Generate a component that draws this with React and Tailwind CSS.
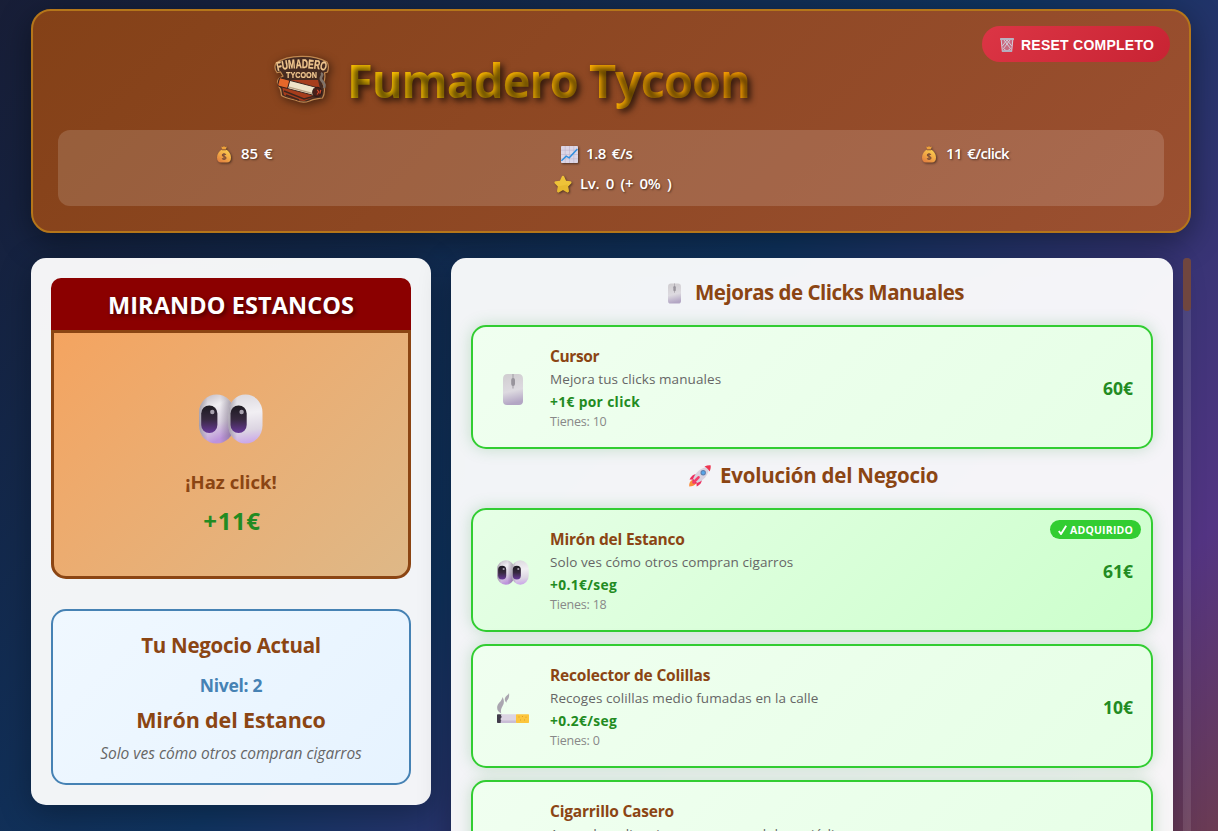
import React from "react";

function Eyes({ className }) {
  return (
    <svg viewBox="0 0 64 50" className={className}>
      <defs>
        <linearGradient id="eyeL" x1="0" y1="0" x2="0.35" y2="1">
          <stop offset="0" stopColor="#b9b2bd" />
          <stop offset="0.35" stopColor="#efedf1" />
          <stop offset="0.7" stopColor="#d8cfdf" />
          <stop offset="1" stopColor="#bd93dc" />
        </linearGradient>
        <linearGradient id="eyeR" x1="0.3" y1="0" x2="0.4" y2="1">
          <stop offset="0" stopColor="#dcd9df" />
          <stop offset="0.4" stopColor="#f1eff3" />
          <stop offset="0.75" stopColor="#dcd5e2" />
          <stop offset="1" stopColor="#cba8e8" />
        </linearGradient>
        <linearGradient id="eyeSide" x1="0" y1="0" x2="1" y2="0">
          <stop offset="0" stopColor="#6f6678" stopOpacity="0.55" />
          <stop offset="0.25" stopColor="#6f6678" stopOpacity="0" />
        </linearGradient>
        <linearGradient id="eyeInner" x1="0" y1="0" x2="1" y2="0">
          <stop offset="0.6" stopColor="#6f6678" stopOpacity="0" />
          <stop offset="0.9" stopColor="#6f6678" stopOpacity="0.5" />
        </linearGradient>
        <linearGradient id="pupil" x1="0" y1="0" x2="0" y2="1">
          <stop offset="0" stopColor="#1d1a21" />
          <stop offset="0.5" stopColor="#37293f" />
          <stop offset="1" stopColor="#69399a" />
        </linearGradient>
      </defs>
      <rect x="0" y="0.5" width="35" height="49" rx="17.5" ry="18" fill="url(#eyeL)" />
      <rect x="0" y="0.5" width="35" height="49" rx="17.5" ry="18" fill="url(#eyeSide)" />
      <rect x="0" y="0.5" width="35" height="49" rx="17.5" ry="18" fill="url(#eyeInner)" />
      <rect x="29.5" y="0.5" width="34" height="49" rx="17" ry="18" fill="url(#eyeR)" />
      <rect x="29.5" y="0.5" width="34" height="49" rx="17" ry="18" fill="url(#eyeSide)" />
      <rect x="2.2" y="11.5" width="16.2" height="27.5" rx="8" fill="url(#pupil)" />
      <rect x="31.5" y="11.5" width="16.2" height="27.5" rx="8" fill="url(#pupil)" />
      <circle cx="13.3" cy="18" r="2.2" fill="#a8a1ae" />
      <circle cx="42.6" cy="18" r="2.2" fill="#a8a1ae" />
    </svg>
  );
}

function Mouse({ className }) {
  return (
    <svg viewBox="0 0 20 31" className={className}>
      <defs>
        <linearGradient id="mouseBody" x1="0" y1="0" x2="0.15" y2="1">
          <stop offset="0" stopColor="#d0cdd0" />
          <stop offset="0.6" stopColor="#dddae0" />
          <stop offset="1" stopColor="#b3a6c4" />
        </linearGradient>
      </defs>
      <path d="M4.5 0h11C18.3 0 20 1.8 20 5v22c0 2.6-1.4 4-4 4H4c-2.600 0-4-1.400-4-4V5c0-3.200 1.700-5 4.500-5z" fill="url(#mouseBody)" />
      <path d="M10 0v14.500" stroke="#a5a1a8" strokeWidth="1.100" />
      <rect x="8.200" y="4" width="3.800" height="8" rx="1.900" fill="#98949c" />
    </svg>
  );
}

function Cigarette({ className }) {
  return (
    <svg viewBox="0 0 32 30" className={className}>
      <path d="M5.500 4C7.500 7.500 7.200 10.500 5.600 13 4.300 15.200 3.400 17.500 4.300 20.500 0.500 18.500-0.500 15.500 0.500 12.500 1.500 9.500 5 8 5.500 4z" fill="#aaa6b0" />
      <path d="M12 0c.5 3.500-.2 5.500-1.500 7-.8.800-1 1.600-.8 2.800C7.500 8 7.300 6 8.500 4 9.500 2.400 11.500 1.800 12 0z" fill="#aaa6b0" />
      <rect x="0" y="21.300" width="5" height="8.700" rx="0.800" fill="#413c4b" />
      <path d="M3.600 21.300h16V30h-16l1-2-1.200-2 1.300-2z" fill="#dcd5e3" />
      <rect x="3.800" y="27.500" width="15.500" height="2.500" fill="#c9bdd6" />
      <rect x="19" y="21.300" width="13" height="8.700" rx="0.700" fill="#fcc63c" />
      <path d="M21.500 24h1M25 23.500h1M28.500 24.200h1M23 27h1M27 27h1" stroke="#dc9b27" strokeWidth="1" />
    </svg>
  );
}

function MoneyBag({ className }) {
  return (
    <svg viewBox="0 0 16 17" className={className}>
      <defs>
        <linearGradient id="bag" x1="0.8" y1="0" x2="0.2" y2="1">
          <stop offset="0" stopColor="#fbd04f" />
          <stop offset="0.55" stopColor="#f1a545" />
          <stop offset="1" stopColor="#e07d3f" />
        </linearGradient>
      </defs>
      <path d="M5.400.6Q6.500 1.300 8 .3q1.500 1 2.700.3-.1 2-1.300 2.900H6.600Q5.400 2.600 5.400.600z" fill="#eda23a" />
      <path d="M6.200 3.600h3.600C12.800 5 15 8 15 11.500c0 3.500-1.500 5-4 5H5c-2.500 0-4-1.500-4-5C1 8 3.200 5 6.200 3.600z" fill="url(#bag)" />
      <path d="M6 3.800h4" stroke="#9a5930" strokeWidth="1" />
      <path d="M9.900 8.600C9.200 7.700 6.200 7.700 6.300 9.300c.1 1.500 3.700 1 3.700 2.600 0 1.600-3.100 1.600-3.900.5M8 6.900v7.200" stroke="#7a4a36" strokeWidth="1.100" fill="none" />
    </svg>
  );
}

function Chart({ className }) {
  return (
    <svg viewBox="0 0 17 17" className={className}>
      <rect width="17" height="17" rx="0.800" fill="#dcd6e6" />
      <path d="M4.200 0v17M8.500 0v17M12.800 0v17M0 4.200h17M0 8.500h17M0 12.800h17" stroke="#bdb3cd" strokeWidth="0.600" />
      <path d="M.4 14.800 5.200 10.200 8.200 11.800 16.400 3" stroke="#2e8ede" strokeWidth="1.500" fill="none" />
    </svg>
  );
}

function Star({ className }) {
  return (
    <svg viewBox="0 0 18 18" className={className}>
      <path d="M9 .8c.6 0 1 .4 1.300 1l1.800 3.900 4.200.5c1.300.2 1.700 1.400.8 2.300l-3 3 .8 4.300c.2 1.200-.9 2-2 1.400L9 15.100l-3.900 2.100c-1.100.6-2.200-.2-2-1.400l.8-4.300-3-3C0 7.600.4 6.400 1.700 6.200l4.200-.5 1.800-3.900c.3-.6.700-1 1.300-1z" fill="#eec338" />
      <path d="M9 15.100l-3.900 2.100c-1.100.6-2.200-.2-2-1.400l.8-4.300 9.500-2 .7 2 .8 4.300c.2 1.200-.9 2-2 1.400z" fill="#d9a520" opacity="0.350" />
    </svg>
  );
}

function Trash({ className }) {
  return (
    <svg viewBox="0 0 14 14" className={className}>
      <path d="M.9 1.200 2.200 13.200h9.600L13.100 1.200z" fill="#c96a80" />
      <path d="M1.200 2 2.300 13h9.400L12.800 2M4 2l6.500 8.500L7.500 13M10 2 3.500 10.500 6.500 13M7 2l4.700 6M7 2 2.300 8M5.500 13h3" stroke="#d3cddb" strokeWidth="1" fill="none" />
      <rect x="0" y="0" width="14" height="2" rx="0.600" fill="#b9b3c1" />
      <rect x="1.800" y="12.300" width="10.400" height="1.700" rx="0.500" fill="#b3adbd" />
    </svg>
  );
}

function Rocket({ className }) {
  return (
    <svg viewBox="0 0 22 22" className={className}>
      <path d="M.2 21.500c-.2-3 .8-5.500 3-6.500l4 3.500c-1.500 2-4 3-7 3z" fill="#fb8d3a" />
      <path d="M8.500 9.500C5.500 8.700 2.500 10.500.5 14.500l5.500.3zM12.500 13.500c1 3-.7 6-4.800 8L7.200 16z" fill="#ee2f5f" />
      <path d="M4 14C6.500 7.500 11 2.800 20.500 1.200 19.500 10.500 14.500 15.500 8 18z" fill="#d9d2df" />
      <path d="M4 14 8 18 6 18.800 3.200 16z" fill="#d9375e" />
      <path d="M15.500 1.500C17.500.6 19.800.2 21.700.4 21.900 2.200 21.500 4.600 20.600 6.500 19.500 4.500 17.800 2.500 15.500 1.500z" fill="#ee3550" />
      <circle cx="14.200" cy="7.800" r="2.700" fill="#5c7fae" />
      <circle cx="14.200" cy="7.800" r="1.700" fill="#57a5ea" />
      <path d="M4.500 17.500 9.500 12.300" stroke="#f43c6b" strokeWidth="2.600" strokeLinecap="round" />
    </svg>
  );
}

function Logo() {
  return (
    <svg viewBox="0 0 56 48" className="-mt-[3px] h-12 w-14 shrink-0 drop-shadow-[2px_2px_4px_rgba(0,0,0,0.5)]">
      <path d="M2 8C14-.5 40-1 53 7c2 3 1.500 7 .5 10l-3 1c1 4 0 8-1.500 11 2 3 2 10-.5 14-5 1-9 .5-13 3-5 2-9 1.500-13-.5C17 44 11 43 7.500 40.500 7 37 7.500 34 4.500 31 3 28 3.500 25 5 23.500L9 21 6.500 17 3 17.500C1 15 .5 11 2 8z" fill="#452a20" stroke="#c08850" strokeWidth="1.200" />
      <path d="M12 25h32l3 13-7 4-10 4-8-1-12-5-2-9z" fill="#a63d1c" />
      <path d="M10 36 30 44l11-3M12 40l13 5" stroke="#3e261d" strokeWidth="1.400" fill="none" />
      <g transform="rotate(15 6 27)">
        <rect x="4.500" y="22.800" width="11" height="8.500" rx="1.500" fill="#e5672a" stroke="#39211b" strokeWidth="1" />
        <rect x="15" y="22.800" width="27" height="8.500" fill="#eee3c8" stroke="#39211b" strokeWidth="1" />
        <path d="M16 29.700h26" stroke="#b8a183" strokeWidth="1.200" />
        <ellipse cx="44.500" cy="27" rx="4.500" ry="4.600" fill="#4a2018" stroke="#2d1a18" />
        <path d="M44 25l2 1.500-1 3M47.500 24v4" stroke="#d4492c" strokeWidth="1.100" fill="none" />
      </g>
      <path d="M47 18c4 2-3 4 1 8 3 3 3 4 2 7" stroke="#80736a" strokeWidth="2.500" fill="none" />
      <defs>
        <path id="logoArc" d="M3.500 16Q28 10 52.500 16" />
      </defs>
      <text fontFamily="'Liberation Sans', sans-serif" fontWeight="700" fontSize="12.500" fill="#f2c890" stroke="#f2c890" strokeWidth="0.300">
        <textPath href="#logoArc" textLength="49" lengthAdjust="spacingAndGlyphs">FUMADERO</textPath>
      </text>
      <text x="12" y="22.800" fontFamily="'Liberation Sans', sans-serif" fontWeight="700" fontSize="9" fill="#f2c890" stroke="#f2c890" strokeWidth="0.200" textLength="31" lengthAdjust="spacingAndGlyphs">TYCOON</text>
    </svg>
  );
}

const upgrades = [
  { icon: "eyes", name: "Mirón del Estanco", nameClass: "tracking-[-0.2px]", desc: "Solo ves cómo otros compran cigarros", bonus: "+0.1€/seg", owned: 18, price: "61€", acquired: true },
  { icon: "cig", name: "Recolector de Colillas", nameClass: "tracking-[-0.2px]", desc: "Recoges colillas medio fumadas en la calle", bonus: "+0.2€/seg", owned: 0, price: "10€" },
  { icon: "cigLow", name: "Cigarrillo Casero", nameClass: "tracking-[-0.2px]", desc: "Aprendes a liar cigarros con papel de periódico", bonus: "+0.5€/seg", owned: 0, price: "50€" },
];

function UpgradeCard({ item }) {
  return (
    <div
      className={
        "relative flex h-[124px] shrink-0 items-center rounded-[15px] border-2 border-[#32cd32] pl-[22px] pr-[18px] shadow-[0_0_15px_rgba(50,160,70,0.25)] " +
        (item.acquired ? "bg-linear-135 from-[#e6ffe6] to-[#ccffcc]" : "bg-linear-135 from-[#f0fff0] to-[#e6ffe6]")
      }
    >
      <div className="flex w-9 justify-center">
        {item.icon === "mouse" && <Mouse className="mt-1 h-[31px] w-5" />}
        {item.icon === "eyes" && <Eyes className="mt-1 h-[25px] w-8" />}
        {item.icon === "cig" && <Cigarette className="mt-1 h-[30px] w-8" />}
        {item.icon === "cigLow" && <Cigarette className="mt-3 h-[30px] w-8" />}
      </div>
      <div className="ml-[19px] flex-1 whitespace-nowrap pt-[2px]">
        <div className={"text-[15.5px] font-bold leading-[23px] text-[#8b4513] " + item.nameClass}>{item.name}</div>
        <div className="text-[13.5px] leading-[23px] tracking-[0.08px] text-[#666]">{item.desc}</div>
        <div className="text-[13.8px] font-bold leading-[21px] tracking-[0.35px] text-[#228b22]">{item.bonus}</div>
        <div className="text-[12.5px] leading-[20px] tracking-[-0.2px] text-[#888]">Tienes: {item.owned}</div>
      </div>
      <div className="pt-0.5 text-[17.5px] font-bold leading-6 text-[#228b22]">{item.price}</div>
      {item.acquired && (
        <div className="absolute right-2.5 top-2.5 flex h-[19px] w-[91px] items-center gap-[3px] rounded-[10px] bg-[#32cd32] pl-2 pt-0.5 text-[10.5px] font-bold leading-[17px] tracking-[0.2px] text-white">
          <svg viewBox="0 0 9 10" className="mb-0.5 h-2.5 w-[9px]">
            <path d="M.8 6 3 9 8.200.8" stroke="white" strokeWidth="1.900" fill="none" />
          </svg>
          ADQUIRIDO
        </div>
      )}
    </div>
  );
}

const textShadow = "[text-shadow:1px_1px_2px_rgba(0,0,0,0.5)]";

export default function App() {
  return (
    <div className="h-[831px] w-[1218px] overflow-hidden bg-[linear-gradient(135deg,#1a1a2e_-200px,#16213e_150px,#0f3460_724px,#533483_1231px,#8b4513_1738px)] pl-[31px] pt-[9px] font-['Open_Sans','Noto_Sans',sans-serif]">
      <header className="flex h-[224px] w-[1160px] flex-col rounded-[20px] border-2 border-[#b5761a] bg-linear-135 from-[#844117] to-[#9b5031] px-[25px] pt-[15px] shadow-[0_8px_32px_rgba(0,0,0,0.4)]">
        <div className="-mr-1.5 flex h-[104px] items-start pl-[216px]">
          <div className="flex items-center gap-[17px] pt-[21px]">
            <Logo />
            <h1 className="h-[66px] whitespace-nowrap bg-linear-45 from-[#ffcc00] to-[#ff9d00] bg-clip-text text-[47px] font-bold leading-[66px] tracking-[-1.05px] text-transparent [text-shadow:3px_3px_6px_rgba(0,0,0,0.7)]">
              Fumadero Tycoon
            </h1>
          </div>
          <button className="ml-auto flex h-9 w-[188px] items-center gap-[7px] rounded-[18px] bg-linear-135 from-[#dc3545] to-[#c82333] pl-[18px] font-['Liberation_Sans',sans-serif] text-[14px] font-bold tracking-[0.25px] text-white">
            <Trash className="mt-px h-3.5 w-3.5" />
            <span className="pt-0.5">RESET COMPLETO</span>
          </button>
        </div>
        <div className={"h-[76px] rounded-[12px] bg-white/15 text-[15px] font-semibold text-white " + textShadow}>
          <div className="flex h-[39px] pt-[9px]">
            <div className="flex w-[344px] items-center gap-[9px] pl-[158px]">
              <MoneyBag className="h-[17px] w-4 drop-shadow-[1px_1px_1px_rgba(0,0,0,0.5)]" />
              <span className="mb-0.5 leading-[26px] [word-spacing:2px]">85 €</span>
            </div>
            <div className="flex w-[360px] items-center gap-2 pl-[159px]">
              <Chart className="h-[17px] w-[17px] drop-shadow-[1px_1px_1px_rgba(0,0,0,0.5)]" />
              <span className="mb-0.5 tracking-[-0.45px] leading-[26px] [word-spacing:2.5px]">1.8 €/s</span>
            </div>
            <div className="flex items-center gap-[9px] pl-[159px]">
              <MoneyBag className="h-[17px] w-4 drop-shadow-[1px_1px_1px_rgba(0,0,0,0.5)]" />
              <span className="mb-0.5 tracking-[-0.65px] leading-[26px] [word-spacing:2.2px]">11 €/click</span>
            </div>
          </div>
          <div className="flex h-[30px] items-center gap-2 pl-[496px]">
            <Star className="h-[18px] w-[18px] drop-shadow-[1px_1px_1px_rgba(0,0,0,0.5)]" />
            <span className="mb-0.5 tracking-[-0.3px] leading-[26px] [word-spacing:2.8px]">Lv. 0 (+ 0% )</span>
          </div>
        </div>
      </header>

      <main className="mt-[25px] flex items-start">
        <section className="h-[547px] w-[400px] rounded-[15px] bg-white/95 p-5 text-center shadow-[0_8px_32px_rgba(0,0,0,0.3)]">
          <h2 className="h-[52px] rounded-t-[10px] bg-[#8b0000] text-[23.5px] font-bold leading-[54px] tracking-[0.1px] text-white [text-shadow:2px_2px_4px_rgba(0,0,0,0.5)]">
            MIRANDO ESTANCOS
          </h2>
          <div className="flex h-[249px] flex-col items-center rounded-b-[15px] border-3 border-[#8b4513] bg-linear-135 from-[#f4a460] to-[#deb887] pt-[61px]">
            <Eyes className="h-[50px] w-16" />
            <div className="mt-[25px] text-[18.5px] font-bold leading-[26px] text-[#8b4513]">¡Haz click!</div>
            <div className="mt-[11px] pl-0.5 text-[24px] font-bold leading-[30px] tracking-[0.6px] text-[#228b22]">+11€</div>
          </div>
          <div className="mt-[30px] h-44 rounded-[15px] border-2 border-[#4682b4] bg-linear-135 from-[#f0f8ff] to-[#e6f3ff] pt-[18px]">
            <h3 className="text-[20.5px] font-bold leading-8 tracking-[-0.28px] text-[#8b4513]">Tu Negocio Actual</h3>
            <div className="mt-2.5 text-[17.5px] font-bold leading-7 tracking-[-0.3px] text-[#4682b4]">Nivel: 2</div>
            <div className="mt-[5px] text-[21.5px] font-bold leading-8 tracking-[-0.12px] text-[#8b4513]">Mirón del Estanco</div>
            <div className="mt-[3px] text-[15.5px] italic leading-7 text-[#666]">Solo ves cómo otros compran cigarros</div>
          </div>
        </section>

        <section className="ml-5 flex h-[600px] w-[722px] flex-col rounded-t-[15px] bg-white/95 p-5 shadow-[0_8px_32px_rgba(0,0,0,0.3)]">
          <h2 className="mb-[17px] flex h-[30px] shrink-0 items-center pl-[197px] text-[20.5px] font-bold tracking-[-0.5px] text-[#8b4513]">
            <Mouse className="mr-[14px] h-[21px] w-[13px]" />
            <span className="mb-0.5">Mejoras de Clicks Manuales</span>
          </h2>
          <UpgradeCard item={{ icon: "mouse", name: "Cursor", nameClass: "tracking-[-0.4px]", desc: "Mejora tus clicks manuales", bonus: "+1€ por click", owned: 10, price: "60€" }} />
          <h2 className="mb-[17px] mt-3 flex h-[30px] shrink-0 items-center pl-[218px] text-[20.5px] font-bold tracking-[-0.23px] text-[#8b4513]">
            <Rocket className="mr-[9px] h-[22px] w-[22px]" />
            <span className="mb-0.5">Evolución del Negocio</span>
          </h2>
          <div className="flex flex-col gap-3">
            {upgrades.map((u) => (
              <UpgradeCard key={u.name} item={u} />
            ))}
          </div>
        </section>

        <div className="ml-2.5 h-[600px] w-2 rounded-t bg-white/10">
          <div className="h-[53px] rounded bg-[#70463f]" />
        </div>
      </main>
    </div>
  );
}
